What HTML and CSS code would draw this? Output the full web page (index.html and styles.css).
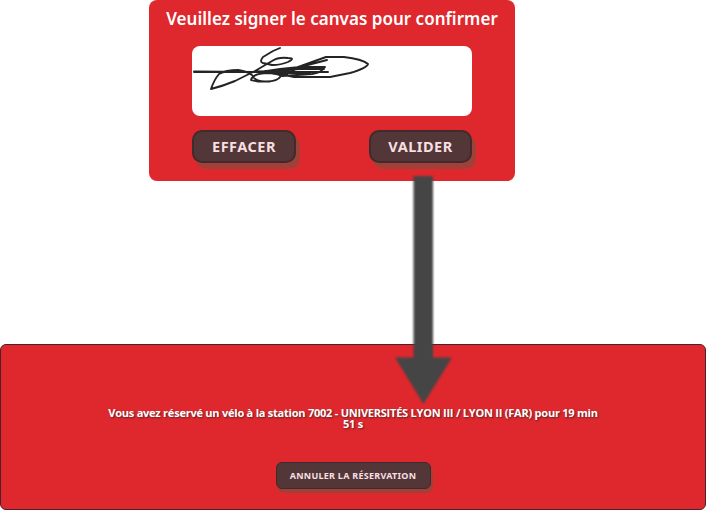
FILE: index.html
```html
<!DOCTYPE html>
<html lang="fr">
<head>
<meta charset="utf-8">
<title>Réservation de vélo</title>
<link rel="stylesheet" href="styles.css">
</head>
<body>
<section class="sign">
  <h1 class="sign-title">Veuillez signer le canvas pour confirmer</h1>
  <div class="pad">
    <svg width="280" height="70" viewBox="192 46 280 70" fill="none" stroke="#242424" stroke-width="1.900" stroke-linecap="round" stroke-linejoin="round">
      <path d="M280 48L273 51L263 57Q259 62 263 63L272 65Q281 65 288 62Q296 58 288 58Q278 57 272 61L255 71L235 81Q223 86 211 89Q214 80 219 74Q226 70 238 70Q246 71 252 75Q254 81 265 81.500Q277 82 281 76Q277 73 266 73Q252 74 251 80L258 81.500H270"/>
      <path d="M194 72H328M194 71.500L260 72L280 69L300 67H325Q321 73 312 74L282 76M287 71L326 57H344Q362 59 368 64Q367 68 350 73L330 77H294L280 74L256 71M327 60L300 67L283 76M265 71L300 69L324 69M260 73L310 73"/>
    </svg>
  </div>
  <div class="actions">
    <button class="btn">EFFACER</button>
    <button class="btn">VALIDER</button>
  </div>
</section>
<section class="booking">
  <p class="message">Vous avez réservé un vélo à la station 7002 - UNIVERSITÉS LYON III / LYON II (FAR) pour 19 min<br>51 s</p>
  <button class="btn btn-small">ANNULER LA RÉSERVATION</button>
</section>
<svg class="arrow" width="66" height="236" viewBox="0 0 66 236"><path d="M23.500 3H43V184.500H62L33.500 231L5 184.500H23.500Z"/></svg>
</body>
</html>
```
FILE: styles.css
```css
* { box-sizing: border-box; }
body {
  margin: 0;
  width: 706px;
  height: 510px;
  display: flex;
  flex-direction: column;
  justify-content: space-between;
  position: relative;
  overflow: hidden;
  background: #fff;
  font-family: "Open Sans", sans-serif;
}
.sign {
  width: 366px;
  height: 181px;
  margin-left: 149px;
  padding: 6px 43px 0;
  background: #df282d;
  border-radius: 8px;
}
.sign-title {
  margin: 0 -43px 14px;
  height: 26px;
  line-height: 26px;
  text-align: center;
  color: #fff;
  font-family: "Noto Sans", sans-serif;
  font-size: 17px;
  font-weight: 600;
  letter-spacing: 0.02px;
  white-space: nowrap;
}
.pad {
  height: 70px;
  background: #fff;
  border-radius: 8px;
  overflow: hidden;
}
.pad svg { display: block; }
.actions {
  display: flex;
  justify-content: space-between;
  margin-top: 14px;
}
.btn {
  width: 104px;
  height: 33px;
  padding: 0;
  border: 2px solid #402a2b;
  border-radius: 10px;
  background: #533738;
  color: #f7dfe2;
  font: bold 14.5px/29px "Noto Sans", sans-serif;
  letter-spacing: 0.5px;
  white-space: nowrap;
  box-shadow: 4px 6px 0 #a04038;
}
.btn + .btn { width: 103px; }
.booking {
  height: 166px;
  display: flex;
  flex-direction: column;
  align-items: center;
  padding-top: 62px;
  border: 1px solid #4c2226;
  border-radius: 6px;
  background: #df282d;
}
.message {
  margin: 0 0 32px;
  height: 23px;
  text-align: center;
  color: #fff;
  font-size: 11px;
  font-weight: 700;
  line-height: 11px;
  letter-spacing: -0.23px;
  text-shadow: 1px 1px 2px #5c2024;
  white-space: nowrap;
}
.btn-small {
  width: 155px;
  height: 27px;
  border-width: 1px;
  border-radius: 6px;
  font-size: 9px;
  line-height: 25px;
  letter-spacing: 0.27px;
  box-shadow: 2px 4px 1px #a04038;
}
.arrow {
  position: absolute;
  left: 390px;
  top: 173px;
  fill: #454545;
  filter: blur(0.8px);
}
```
